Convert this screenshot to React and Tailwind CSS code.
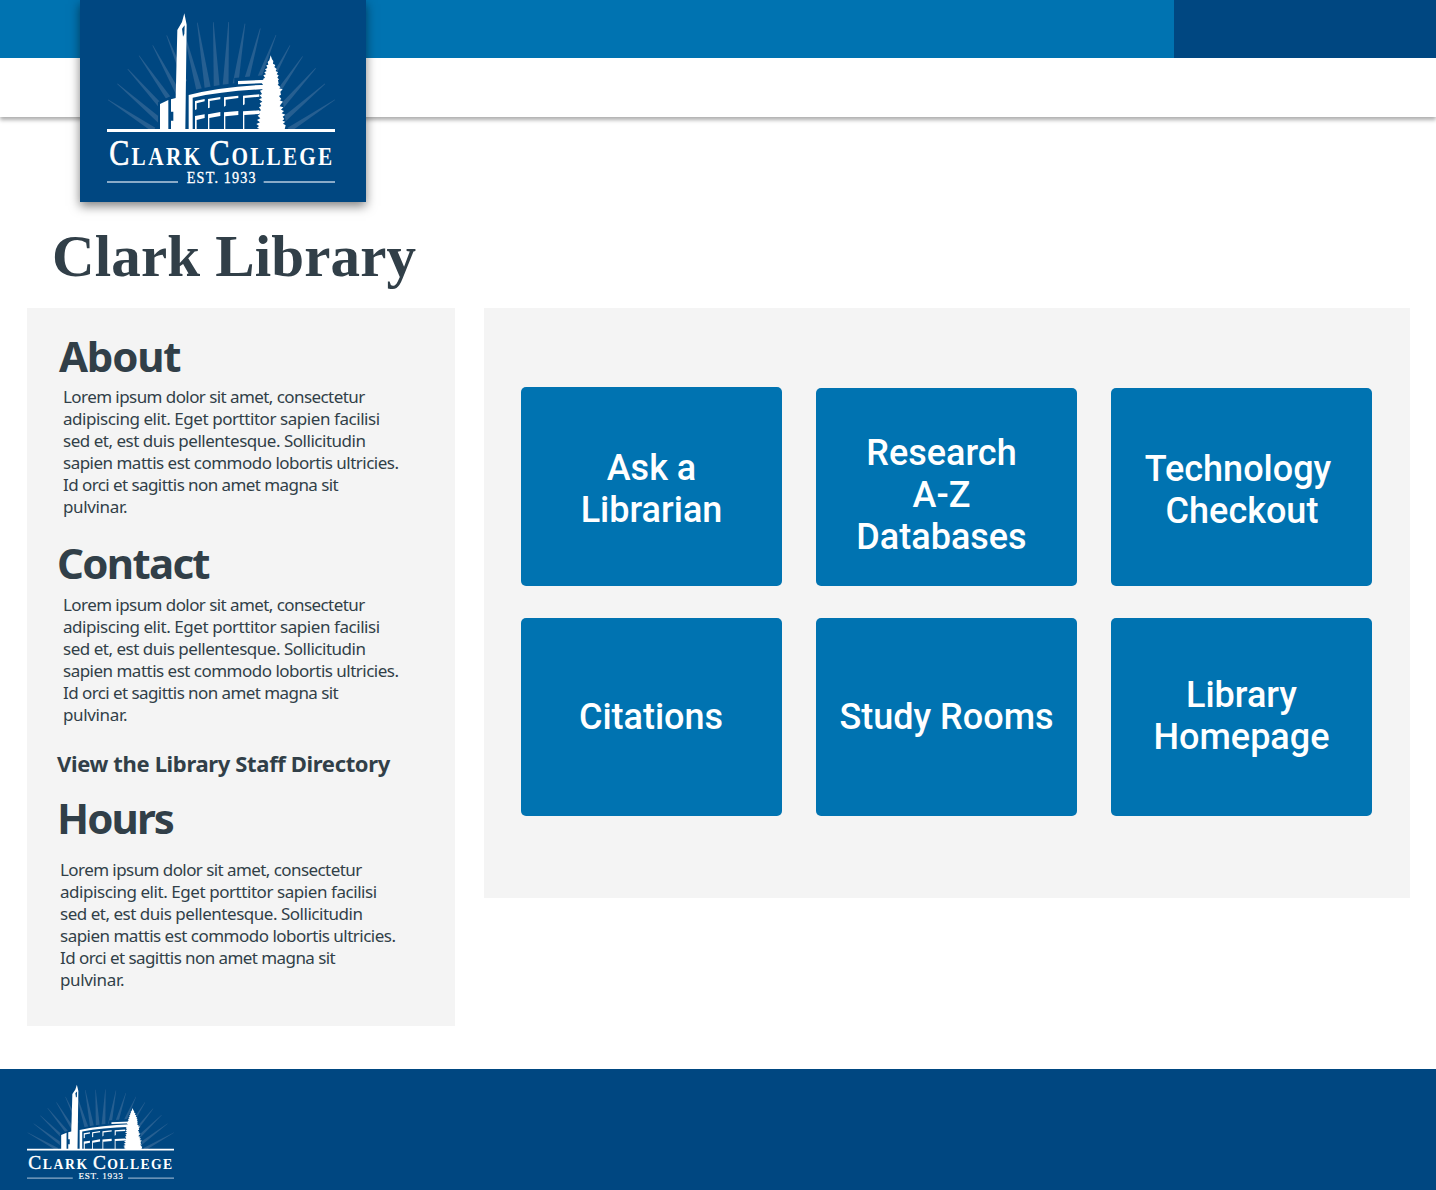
const RAYS = [
  [96, 299, 165], [124, 251, 190], [155, 207, 175], [189, 167, 178], [230, 136, 168],
  [272, 106, 150], [322, 90, 205], [364, 68, 200], [412, 67, 200], [458, 66, 195],
  [507, 71, 188], [553, 85, 155], [600, 105, 140], [642, 136, 150], [680, 169, 165],
  [719, 205, 175], [747, 251, 190], [777, 299, 165],
];

function rayPoints([x, y, len]) {
  const dx = 436 - x;
  const dy = 522 - y;
  const d = Math.hypot(dx, dy);
  const ux = dx / d;
  const uy = dy / d;
  const w = len * 0.046;
  const bx = x + ux * len;
  const by = y + uy * len;
  return `${x - uy},${y + ux} ${bx - uy * w},${by + ux * w} ${bx + uy * w},${by - ux * w} ${x + uy},${y - ux}`;
}

function Logo({ className }) {
  return (
    <svg viewBox="93 36 684 531" preserveAspectRatio="none" className={className} role="img" aria-label="Clark College">
      <g fill="#265f91">
        {RAYS.map((r) => <polygon key={r[0]} points={rayPoints(r)} />)}
      </g>
      <path fill="#004781" d="M93 388H777V410H93ZM246 388V306L290 286 332 276Q400 258 475 250V234L560 226 576 180 600 200 616 270 632 388Z" />
      <g fill="#fff">
        <path d="M252 388V312L277 300V388Z" />
        <path d="M285 388V362H292V335H285V298L299 294 304 90 318 66 325 40 332 74 328 388Z" />
        <path d="M338 388V285Q440 259 575 254V267Q440 273 350 293V388Z" />
        <path d="M486 243L575 239V249L486 253Z" />
        <path d="M357 388V348L386 343V354L362 360V388Z" />
        <path d="M357 330V303L386 297V304L362 310V328Z" />
        <path d="M396 388V343L433 336V348L400 354V388Z" />
        <path d="M396 325V297L433 291V298L401 303V323Z" />
        <path d="M444 388V337L487 333V345L448 349V388Z" />
        <path d="M444 320V292L487 287V294L449 299V317Z" />
        <path d="M501 388V334L550 331V342L505 345V388Z" />
        <path d="M501 316V287L550 283V290L506 294V313Z" />
        <path d="M584 166L588 178 592 183 591 191 598 195 595 201 602 207 599 213 606 217 602 223 608 226 604 233 609 238 606 241 608 251 605 254 614 262 609 265 620 268 613 275 615 284 609 288 616 297 611 301 621 305 615 312 611 319 622 322 615 329 624 333 617 340 628 344 620 350 625 357 619 362 628 365 621 371 629 376 626 388H552L543 383 549 378 541 372 552 367 543 360 553 355 545 347 552 342 546 336 555 331 549 322 556 318 551 310 559 305 549 298 558 294 551 286 558 282 552 272 560 269 554 261 563 257 557 249 565 245 561 237 567 233 562 226 570 223 565 217 572 213 567 208 574 204 571 196 577 194 575 186 580 181Z" />
        <path d="M93 387H777V396H93Z" />
      </g>
      <path fill="#004781" d="M318 86L326 76 325 102 321 110Z" />
      <path fill="#8aabc8" d="M93 543H306V549H93ZM563 543H777V549H563Z" />
      <g fill="#fff" fontFamily="'Liberation Serif', serif" transform="scale(.85 1)">
        <g stroke="#fff" strokeWidth="2">
          <text x="117" y="494" fontSize="106">C</text>
          <text x="471" y="494" fontSize="106">C</text>
        </g>
        <g fontWeight="700">
          <text x="196" y="494" fontSize="75" textLength="243" lengthAdjust="spacing">LARK</text>
          <text x="549" y="494" fontSize="75" textLength="355" lengthAdjust="spacing">OLLEGE</text>
        </g>
        <text x="391" y="550" fontSize="50" stroke="#fff" strokeWidth="1" textLength="243" lengthAdjust="spacing">EST. 1933</text>
      </g>
    </svg>
  );
}

const LINES = [
  ["Lorem ipsum dolor sit amet, consectetur", "tracking-[-0.57px]"],
  ["adipiscing elit. Eget porttitor sapien facilisi", "tracking-[-0.44px]"],
  ["sed et, est duis pellentesque. Sollicitudin", "tracking-[-0.48px]"],
  ["sapien mattis est commodo lobortis ultricies.", "tracking-[-0.51px]"],
  ["Id orci et sagittis non amet magna sit", "tracking-[-0.57px]"],
  ["pulvinar.", "tracking-[-0.35px]"],
];

function Paragraph({ className }) {
  return (
    <p className={`text-[17px] leading-[22px] whitespace-nowrap ${className}`}>
      {LINES.map(([text, tracking]) => (
        <span key={text} className={`block w-fit ${tracking}`}>{text}</span>
      ))}
    </p>
  );
}

function Tile({ lines, className }) {
  return (
    <a href="#" className={`flex flex-col items-center rounded-[5px] bg-[#0073b1] text-center text-[36px] leading-[42px] font-medium whitespace-nowrap text-white ${className}`}>
      {lines.map((l) => <span key={l}>{l}</span>)}
    </a>
  );
}

export default function App() {
  return (
    <div className="flex h-[1190px] w-[1436px] flex-col overflow-hidden bg-white font-['Noto_Sans',sans-serif] text-[#313f48]">
      <header className="relative h-[117px] shrink-0 bg-white shadow-[0_3px_4px_rgba(0,0,0,0.32)]">
        <div className="flex h-[58px] justify-end bg-[#0073b1]">
          <div className="w-[262px] bg-[#004781]" />
        </div>
        <a href="#" className="absolute top-0 left-[80px] flex h-[202px] w-[286px] bg-[#004781] pt-[12px] pl-[27px] shadow-[0_4px_10px_rgba(0,0,0,0.5)]">
          <Logo className="h-[177px] w-[228px]" />
        </a>
      </header>

      <h1 className="mt-[104px] ml-[52px] h-[87px] w-fit font-['Liberation_Serif',serif] text-[59px] leading-[70px] font-bold tracking-[0.15px]">Clark Library</h1>

      <main className="flex items-start gap-[29px] pl-[27px]">
        <aside className="h-[718px] w-[428px] bg-[#f4f4f4] pl-[30px]">
          <h2 className="mt-[21px] ml-[2px] h-[57px] w-fit text-[42px] leading-[54px] font-bold tracking-[-1.2px]">About</h2>
          <Paragraph className="ml-[6px]" />
          <h2 className="mt-[18px] h-[58px] w-fit text-[42px] leading-[54px] font-bold tracking-[-1.7px]">Contact</h2>
          <Paragraph className="ml-[6px]" />
          <a href="#" className="mt-[21px] block h-[32px] w-fit text-[22px] leading-[32px] font-bold tracking-[-0.35px] whitespace-nowrap">View the Library Staff Directory</a>
          <h2 className="mt-[12px] h-[68px] w-fit text-[42px] leading-[54px] font-bold tracking-[-1.9px]">Hours</h2>
          <Paragraph className="ml-[3px]" />
        </aside>

        <section className="grid h-[590px] w-[926px] grid-cols-[261px_261px_261px] grid-rows-[199px_198px] gap-x-[34px] gap-y-[32px] bg-[#f4f4f4] pt-[79px] pl-[37px] font-['Roboto',sans-serif]">
          <Tile lines={["Ask a", "Librarian"]} className="pt-[60px]" />
          <Tile lines={["Research", "A-Z", "Databases"]} className="mt-px pt-[44px] pr-[10px]" />
          <Tile lines={["Technology", "Checkout"]} className="mt-px pt-[60px] pr-[7px] [&>span:last-child]:pl-[8px]" />
          <Tile lines={["Citations"]} className="pt-[78px] pr-[1px]" />
          <Tile lines={["Study Rooms"]} className="pt-[78px]" />
          <Tile lines={["Library", "Homepage"]} className="pt-[56px]" />
        </section>
      </main>

      <footer className="mt-auto h-[121px] shrink-0 bg-[#004781] pt-[15px] pl-[27px]">
        <Logo className="h-[98px] w-[147px]" />
      </footer>
    </div>
  );
}
